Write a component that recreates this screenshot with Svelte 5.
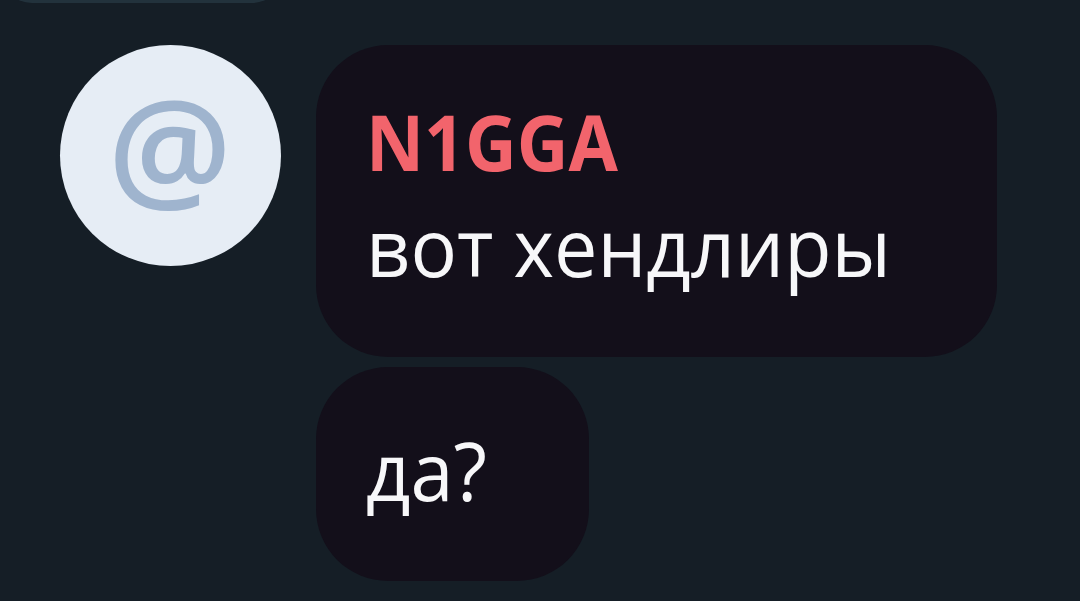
<script>
  const sender = { initial: '@', name: 'N1GGA' };
  const messages = [
    { text: 'вот хендлиры', size: 'wide', showName: true },
    { text: 'да?', size: 'short', showName: false }
  ];
</script>

<div class="chat">
  <div class="previous"></div>
  <div class="group">
    <div class="avatar"><span>{sender.initial}</span></div>
    <div class="messages">
      {#each messages as message}
        <div class="bubble {message.size}">
          {#if message.showName}
            <div class="name">{sender.name}</div>
          {/if}
          <div class="text">{message.text}</div>
        </div>
      {/each}
    </div>
  </div>
</div>

<style>
  :global(body) {
    background: #151e26;
  }

  .chat {
    display: flex;
    flex-direction: column;
    height: 601px;
    overflow: hidden;
    background: #151e26;
    font-family: 'Open Sans', 'Noto Sans', sans-serif;
  }

  /* bottom edge of the message above */
  .previous {
    flex: none;
    width: 284px;
    height: 70px;
    margin-top: -67px;
    margin-bottom: 42px;
    border-radius: 0 0 32px 32px;
    background: #22323c;
  }

  .group {
    display: flex;
    gap: 35px;
    padding-left: 60px;
  }

  .avatar {
    display: flex;
    align-items: center;
    justify-content: center;
    width: 221px;
    height: 221px;
    border-radius: 50%;
    background: #e6edf5;
    color: #9fb4ce;
    font-size: 138px;
    font-weight: 650;
    line-height: 201px;
  }

  .avatar span {
    height: 221px;
    margin-right: 1px;
  }

  .messages {
    display: flex;
    flex-direction: column;
    gap: 10px;
  }

  .bubble {
    box-sizing: border-box;
    padding-left: 50px;
    background: #130f1a;
    white-space: nowrap;
  }

  .wide {
    width: 681px;
    height: 312px;
    padding-top: 44px;
    border-radius: 72px;
  }

  .short {
    width: 273px;
    height: 214px;
    padding-top: 49px;
    border-radius: 72px;
  }

  .name {
    height: 103px;
    color: #f2646c;
    font-family: 'Noto Sans', 'Open Sans', sans-serif;
    font-size: 77px;
    font-weight: 700;
    line-height: 106px;
    transform: scaleX(0.928);
    transform-origin: left;
  }

  .text {
    height: 106px;
    color: #f7f7f9;
    font-size: 81px;
    font-weight: 460;
    line-height: 107px;
    transform: scaleX(0.955);
    transform-origin: left;
  }
</style>
